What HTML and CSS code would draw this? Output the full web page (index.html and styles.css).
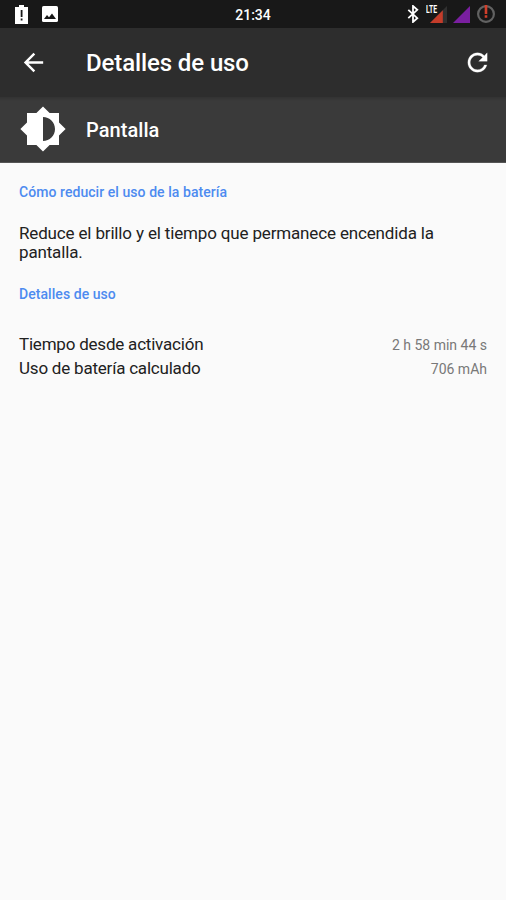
FILE: index.html
```html
<!DOCTYPE html>
<html lang="es">
<head>
<meta charset="utf-8">
<title>Detalles de uso</title>
<link rel="stylesheet" href="styles.css">
</head>
<body>
<header class="status">
  <div class="status-left">
    <svg class="battery" viewBox="0 0 13 20"><path fill="#fff" d="M4 1h5v2h4v17H0V3h4z"/><path fill="#181818" d="M5.700 6h1.800v7H5.700zM5.700 14.500h1.800v2H5.700z"/></svg>
    <svg class="photo" viewBox="0 0 16 16"><rect width="16" height="16" rx="1.600" fill="#fff"/><path fill="#181818" d="M2 13l3-4 2 2.300L10 7.500l4 5.500z"/></svg>
  </div>
  <span class="clock">21:34</span>
  <div class="status-right">
    <svg class="bluetooth" viewBox="0 0 12 18"><path fill="none" stroke="#fff" stroke-width="1.800" d="M1.300 4.800l9 8.400L6 17V1l4.300 3.800-9 8.400"/></svg>
    <div class="lte"><span>LTE</span><svg class="signal" viewBox="0 0 18 18"><path fill="#303030" d="M18 1v17H1z"/><path fill="#c43c2a" d="M13.800 5.200V18H1z"/></svg></div>
    <svg class="signal second" viewBox="0 0 18 18"><path fill="#7a1fa0" d="M18 1v17H1z"/></svg>
    <svg class="ring" viewBox="0 0 18 18"><circle cx="9" cy="9" r="7.900" fill="none" stroke="#626262" stroke-width="2.200"/><path fill="#d23f2b" d="M7.700 0h2.600v9H7.700zM7.700 10.300h2.600v2.400H7.700z"/></svg>
  </div>
</header>
<nav class="toolbar">
  <svg class="back" viewBox="0 0 24 24"><path fill="#fff" d="M20 11H7.830l5.590-5.590L12 4l-8 8 8 8 1.410-1.410L7.830 13H20v-2z"/></svg>
  <h1>Detalles de uso</h1>
  <svg class="refresh" viewBox="0 0 24 24"><path fill="#fff" stroke="#fff" stroke-width=".2" d="M17.650 6.350C16.200 4.900 14.210 4 12 4c-4.420 0-7.990 3.580-7.990 8s3.570 8 7.990 8c3.730 0 6.840-2.550 7.730-6h-2.080c-.82 2.330-3.040 4-5.650 4-3.310 0-6-2.690-6-6s2.690-6 6-6c1.660 0 3.140.69 4.220 1.780L13 11h7V4l-2.350 2.350z"/></svg>
</nav>
<section class="subject">
  <svg class="brightness" viewBox="0 0 24 24"><path fill="#fff" d="M20 15.310L23.310 12 20 8.690V4h-4.690L12 .69 8.690 4H4v4.690L.69 12 4 15.310V20h4.690L12 23.310 15.310 20H20v-4.690zM12 18V6c3.310 0 6 2.690 6 6s-2.690 6-6 6z"/></svg>
  <h2>Pantalla</h2>
</section>
<main>
  <h3>Cómo reducir el uso de la batería</h3>
  <p>Reduce el brillo y el tiempo que permanece encendida la pantalla.</p>
  <h3>Detalles de uso</h3>
  <dl>
    <div class="row"><dt>Tiempo desde activación</dt><dd>2 h 58 min 44 s</dd></div>
    <div class="row"><dt>Uso de batería calculado</dt><dd>706 mAh</dd></div>
  </dl>
</main>
</body>
</html>
```
FILE: styles.css
```css
* { box-sizing: border-box; margin: 0; padding: 0; }
body { min-height: 900px; background: #fafafa; color: #212121; font-family: Roboto, sans-serif; }
svg { display: block; flex: none; }
.status { display: grid; grid-template-columns: 1fr auto 1fr; height: 28px; background: #181818; color: #fff; }
.status-left, .status-right { display: flex; align-items: flex-start; }
.status-left { padding-left: 15px; gap: 14px; }
.battery { width: 13px; height: 20px; margin-top: 4px; }
.photo { width: 16px; height: 16px; margin-top: 6px; }
.clock { font-size: 14px; font-weight: 500; line-height: 30px; }
.status-right { justify-content: flex-end; padding-right: 11px; }
.bluetooth { width: 12px; height: 18px; margin: 5px 7px 0 0; }
.lte { display: flex; align-items: flex-start; margin-right: 5px; }
.lte span { width: 11px; font-size: 10px; font-weight: 700; line-height: 10px; margin: 5px -8px 0 0; transform: scaleX(.68); transform-origin: left; position: relative; }
.signal { width: 18px; height: 18px; margin-top: 5px; }
.second { margin-right: 7px; }
.ring { width: 18px; height: 18px; margin-top: 5px; }
.toolbar { display: flex; align-items: center; height: 69px; padding: 0 14px 0 19px; background: #2d2d2d; color: #fff; }
.back, .refresh { width: 29px; height: 29px; }
.refresh { margin-top: -1px; }
.toolbar h1 { flex: 1; margin-left: 38px; font-size: 24px; font-weight: 500; line-height: 28px; letter-spacing: -.11px; }
.subject { display: flex; align-items: center; height: 66px; padding-left: 19px; background: linear-gradient(#323232, #3a3a3a 4px); border-bottom: 1px solid #555; color: #fff; }
.brightness { width: 48px; height: 48px; margin-top: -2px; }
.subject h2 { margin-left: 19px; font-size: 20px; font-weight: 500; line-height: 24px; letter-spacing: .05px; }
main { padding: 20px 19px 0; }
h3 { color: #4d8bf0; font-size: 14px; font-weight: 500; line-height: 18px; letter-spacing: .06px; }
p { margin: 23px 0; font-size: 17px; line-height: 19px; letter-spacing: -.155px; }
dl { margin-top: 29px; }
.row { display: flex; justify-content: space-between; align-items: baseline; height: 24px; }
dt { font-size: 17px; line-height: 24px; letter-spacing: -.21px; }
dd { font-size: 14px; line-height: 24px; color: #787878; }
```
